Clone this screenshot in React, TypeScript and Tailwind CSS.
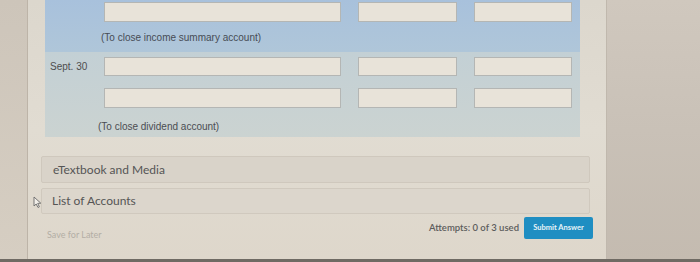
import React from 'react';

const qFont = { fontFamily: '"Liberation Sans", Arial, sans-serif' };
const uiFont = { fontFamily: 'Lato, "Open Sans", sans-serif' };

function Field({ w }: { w: string }) {
	return <div className={`${w} h-full bg-[#e8e3d9] border border-[#b4b6b4]`} />;
}

function FieldRow({ label, h }: { label?: string; h: string }) {
	return (
		<div className={`flex items-center ${h}`}>
			<div className="w-[59px] pl-[5px] text-[10px] text-[#4e4e4e]" style={qFont}>
				{label}
			</div>
			<div className="flex h-full gap-[17px]">
				<Field w="w-[237px]" />
				<Field w="w-[99px]" />
				<Field w="w-[98px]" />
			</div>
		</div>
	);
}

function Pointer() {
	return (
		<svg width="9" height="12" viewBox="0 0 9 12" className="absolute left-[-9px] top-[7px]">
			<path d="M1 1 L1 10 L3.2 8 L5 11.5 L6.4 10.8 L4.7 7.4 L7.8 7.2 Z" fill="#f2efe9" stroke="#6a6a6a" strokeWidth="0.9" strokeLinejoin="round" />
		</svg>
	);
}

export default function App() {
	return (
		<div className="w-[700px] h-[262px] flex flex-col overflow-hidden bg-[#d6cfc4]">
			<div className="flex flex-1">
				{/* left edge of the screen */}
				<div className="w-[28px] border-r border-[#bdb4a8] bg-linear-to-b from-[#cdc5ba] to-[#d6cec2]" />

				{/* page panel */}
				<div className="w-[579px] border-r border-[#c0b8ad] bg-linear-to-b from-[#dcd7cd] via-[#e1dcd2] to-[#ded7cb]">
					<div className="ml-[17px] w-[535px]">
						<div className="h-[52px] bg-linear-to-b from-[#a8c1dc] to-[#afc6d9]">
							<div className="pt-[2px]">
								<FieldRow h="h-[20px]" />
							</div>
							<p className="ml-[56px] mt-[10px] text-[10px] leading-[12px] text-[#474c55]" style={qFont}>
								(To close income summary account)
							</p>
						</div>
						<div className="h-[85px] bg-linear-to-b from-[#c3d0d5] to-[#cbd3d1]">
							<div className="pt-[5px]">
								<FieldRow label="Sept. 30" h="h-[19px]" />
							</div>
							<div className="pt-[12px]">
								<FieldRow h="h-[20px]" />
							</div>
							<p className="ml-[53px] mt-[13px] text-[10px] leading-[12px] text-[#4a4d52]" style={qFont}>
								(To close dividend account)
							</p>
						</div>
					</div>

					<div className="ml-[13px] w-[549px] mt-[19px] flex flex-col gap-[5px]" style={uiFont}>
						<div className="h-[27px] flex items-center pl-[11px] bg-[#d9d3c9] border border-[#cfc8bd] rounded-[2px] text-[12px] text-[#555]">
							eTextbook and Media
						</div>
						<div className="relative h-[26px] flex items-center pl-[10px] bg-[#dcd6cc] border border-[#d0c9be] rounded-[2px] text-[12px] text-[#555]">
							<Pointer />
							List of Accounts
						</div>
					</div>

					<div className="ml-[19px] w-[546px] mt-[3px] flex items-start" style={uiFont}>
						<span className="mt-[11px] text-[9px] text-[#b3aea5]">Save for Later</span>
						<div className="ml-auto flex items-center gap-[5px]">
							<span className="text-[9.5px] font-semibold text-[#5c5c5c]">Attempts: 0 of 3 used</span>
							<div className="w-[69px] h-[22px] flex items-center justify-center rounded-[2px] bg-[#1f8ec2] text-[7.5px] font-bold text-[#e8f3f8]">
								Submit Answer
							</div>
						</div>
					</div>
				</div>

				{/* right side of the screen */}
				<div className="flex-1 bg-linear-to-b from-[#d0c8be] via-[#c9c1b7] to-[#c4bbb0]" />
			</div>
			<div className="h-[3px] bg-[#6f6a63]" />
		</div>
	);
}
